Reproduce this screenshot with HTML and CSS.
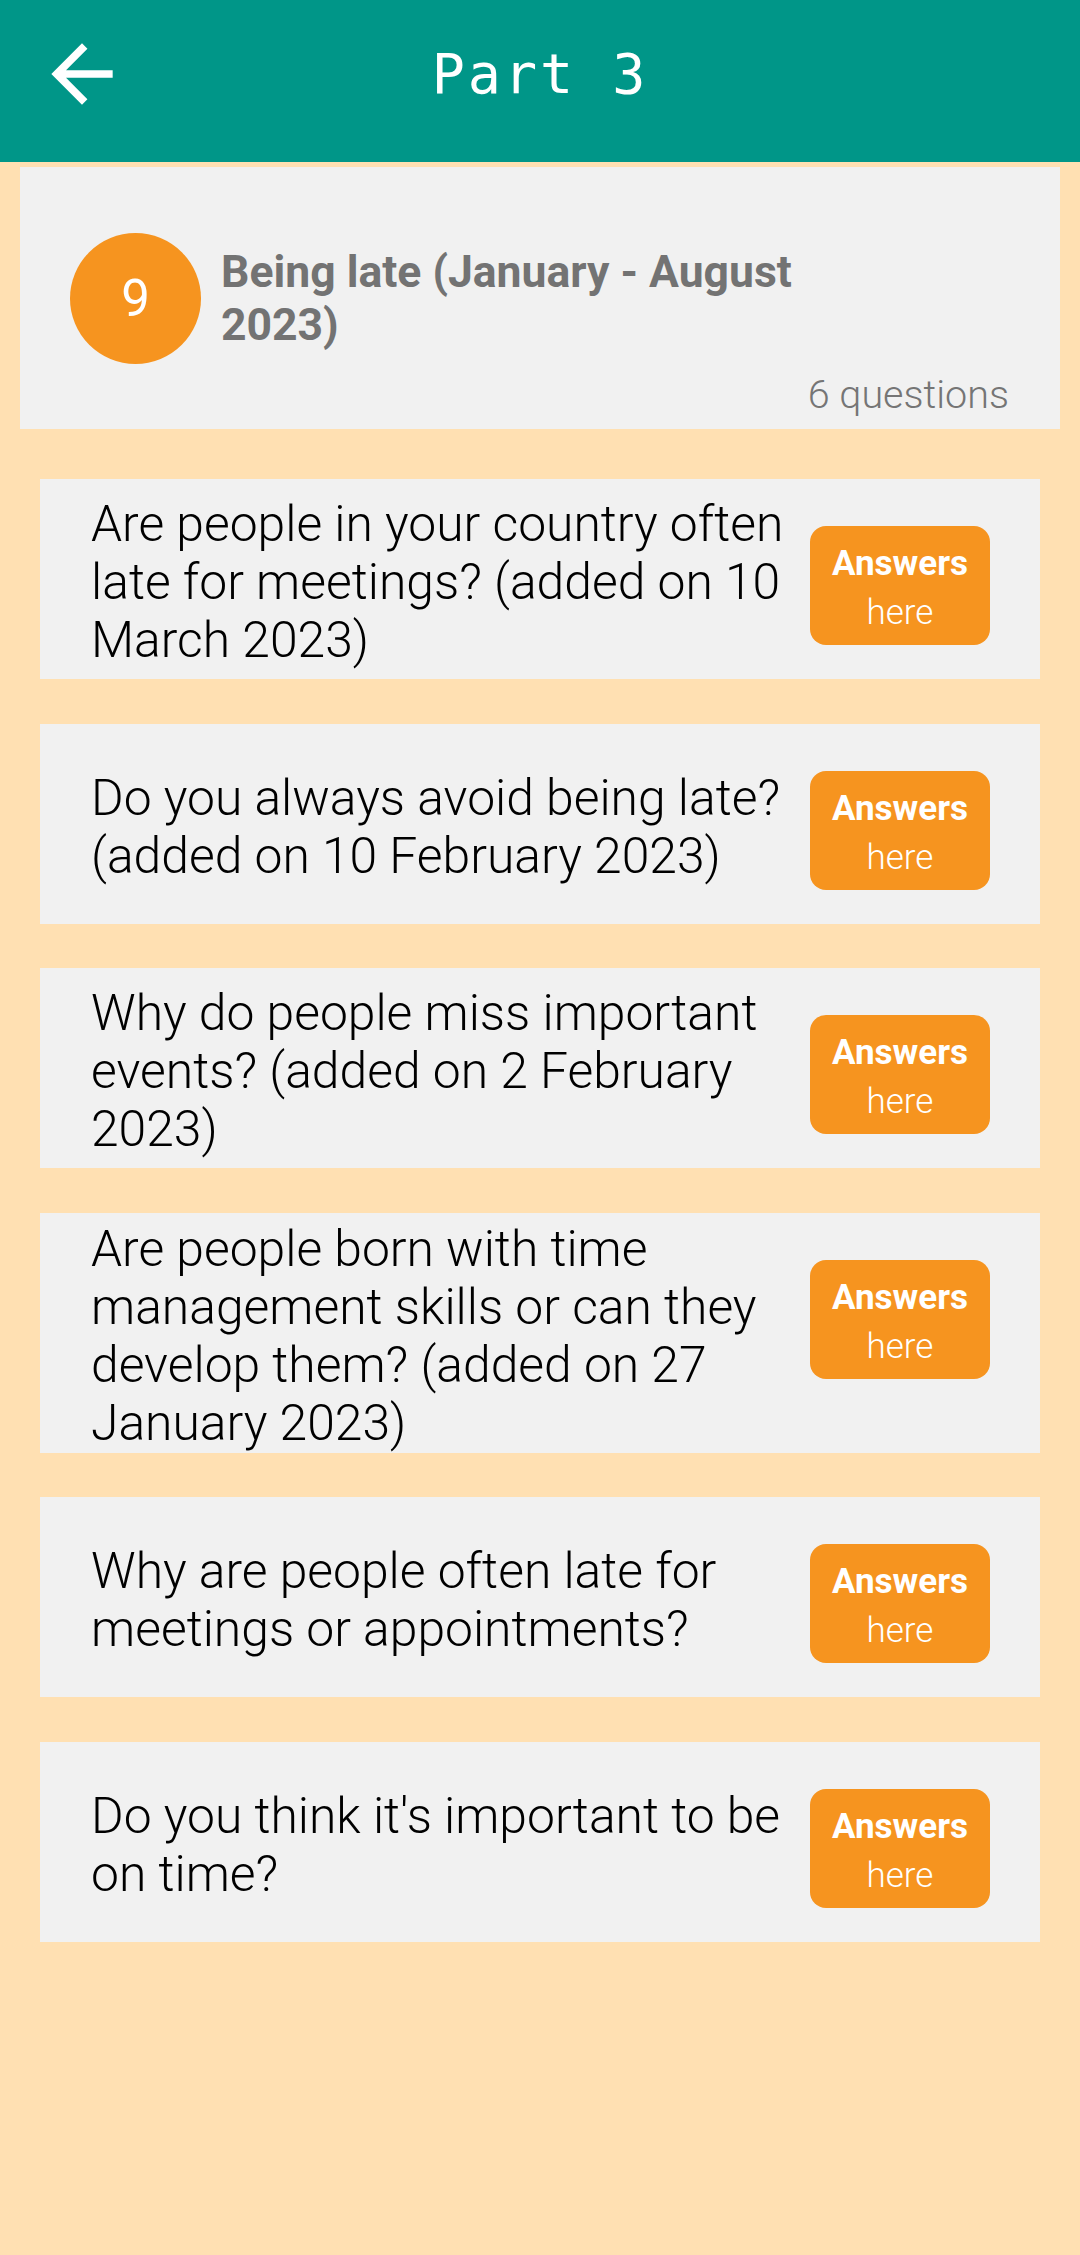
FILE: index.html
```html
<!DOCTYPE html>
<html lang="en">
<head>
<meta charset="utf-8">
<title>Part 3</title>
<link rel="stylesheet" href="styles.css">
</head>
<body>
<header class="toolbar">
  <div class="toolbar-inner">
    <button class="back" aria-label="Back">
      <svg viewBox="0 0 24 24" width="92" height="92"><path fill="#fff" d="M20 11H7.83l5.59-5.59L12 4l-8 8 8 8 1.41-1.41L7.83 13H20v-2z"/></svg>
    </button>
    <h1 class="title">Part 3</h1>
    <span class="spacer"></span>
  </div>
</header>

<section class="topic">
  <div class="topic-row">
    <div class="badge">9</div>
    <h2 class="topic-title">Being late (January - August 2023)</h2>
  </div>
  <div class="topic-count">6 questions</div>
</section>

<main class="questions">
  <div class="q-card">
    <p class="q-text">Are people in your country often late for meetings? (added on 10 March 2023)</p>
    <a class="answers"><b>Answers</b><span>here</span></a>
  </div>
  <div class="q-card">
    <p class="q-text">Do you always avoid being late? (added on 10 February 2023)</p>
    <a class="answers"><b>Answers</b><span>here</span></a>
  </div>
  <div class="q-card">
    <p class="q-text">Why do people miss important events? (added on 2 February 2023)</p>
    <a class="answers"><b>Answers</b><span>here</span></a>
  </div>
  <div class="q-card">
    <p class="q-text">Are people born with time management skills or can they develop them? (added on 27 January 2023)</p>
    <a class="answers"><b>Answers</b><span>here</span></a>
  </div>
  <div class="q-card">
    <p class="q-text">Why are people often late for meetings or appointments?</p>
    <a class="answers"><b>Answers</b><span>here</span></a>
  </div>
  <div class="q-card">
    <p class="q-text">Do you think it's important to be on time?</p>
    <a class="answers"><b>Answers</b><span>here</span></a>
  </div>
</main>
</body>
</html>
```
FILE: styles.css
```css
html, body {
  margin: 0;
  padding: 0;
  background: #FFE0B2;
}
body {
  min-height: 2255px;
  font-family: Roboto, "Noto Sans", sans-serif;
}

.toolbar {
  background: #009688;
  height: 162px;
  box-sizing: border-box;
  padding-bottom: 14px;
}
.toolbar-inner {
  height: 148px;
  display: grid;
  grid-template-columns: 1fr auto 1fr;
  align-items: center;
}
.back {
  justify-self: start;
  margin-left: 36px;
  padding: 0;
  border: 0;
  background: none;
  width: 92px;
  height: 92px;
  display: flex;
}
.title {
  margin: 0;
  font-family: "DejaVu Sans Mono", "Liberation Mono", monospace;
  font-weight: 400;
  font-size: 55px;
  letter-spacing: 3px;
  color: #fff;
  line-height: 64px;
}

.topic {
  margin: 5px 20px 0;
  background: #F1F1F1;
  padding: 66px 51px 13px 50px;
}
.topic-row {
  display: flex;
  align-items: center;
  gap: 20px;
}
.badge {
  flex: none;
  width: 131px;
  height: 131px;
  border-radius: 50%;
  background: #F6941F;
  color: #fff;
  font-size: 51px;
  font-weight: 400;
  display: flex;
  align-items: center;
  justify-content: center;
}
.topic-title {
  margin: 0;
  width: 620px;
  font-size: 44.5px;
  line-height: 53px;
  font-weight: 700;
  color: #737373;
}
.topic-count {
  margin-top: 10px;
  text-align: right;
  font-size: 39.5px;
  font-weight: 300;
  color: #757575;
  line-height: 42px;
}

.questions {
  display: flex;
  flex-direction: column;
  gap: 44.5px;
  padding: 50px 40px 0;
}
.q-card {
  display: flex;
  align-items: center;
  box-sizing: border-box;
  min-height: 200px;
  padding: 7px 50px 1px 51px;
  background: #F1F1F1;
}
.q-text {
  flex: 1;
  margin: 0 12px 0 0;
  font-size: 49.8px;
  line-height: 58px;
  font-weight: 300;
  color: #000;
}
.answers {
  flex: none;
  align-self: flex-start;
  width: 180px;
  box-sizing: border-box;
  margin-top: 40px;
  padding: 13px 0 8px;
  border-radius: 16px;
  background: #F6941F;
  color: #fff;
  font-size: 35px;
  line-height: 49px;
  display: flex;
  flex-direction: column;
  align-items: center;
}
.answers b {
  font-weight: 700;
}
.answers span {
  font-weight: 300;
}
```
